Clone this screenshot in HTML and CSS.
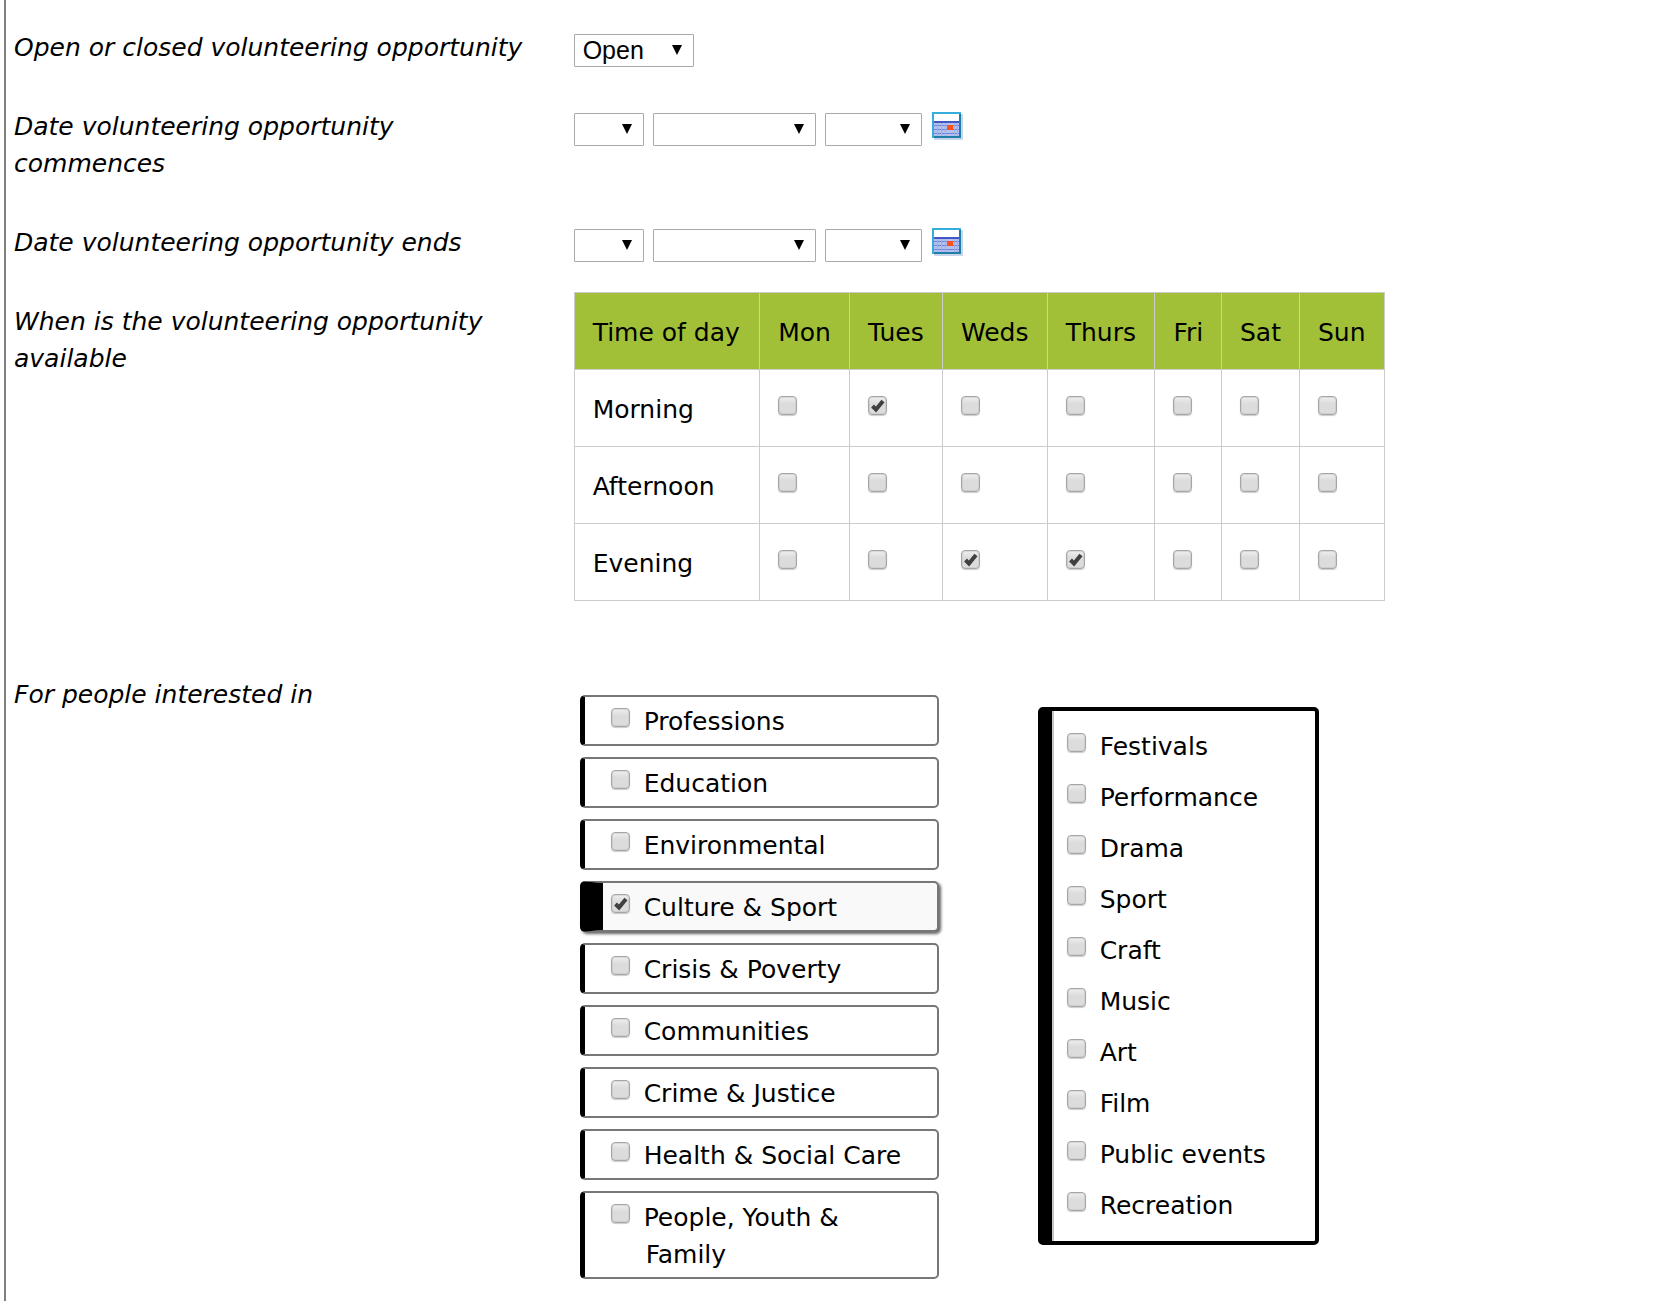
FILE: index.html
```html
<!DOCTYPE html>
<html lang="en">
<head>
<meta charset="utf-8">
<title>Volunteering opportunity</title>
<meta name="viewport" content="width=device-width, initial-scale=1">
<link rel="stylesheet" href="styles.css">
</head>
<body>
<svg class="sprite" aria-hidden="true">
  <symbol id="calendar" viewBox="0 0 31 28">
    <rect x="2" y="2" width="29" height="26" rx="1" fill="#c9d6ea"/>
    <rect x="0" y="0" width="29" height="26" fill="#1f7fa8"/>
    <path d="M0 0H29V2H2V26H0Z" fill="#35aedb"/>
    <rect x="2" y="2" width="25" height="7" fill="#fff"/>
    <rect x="2" y="9" width="25" height="15" fill="#b4c1ee"/>
    <path d="M2 10H27" stroke="#4456c4" stroke-width="2"/>
    <path d="M2 13.500H27M2 17.500H27M2 21.500H27" stroke="#7083d6" stroke-width="1"/>
    <path d="M5.500 11V24M9.500 11V24M13.500 11V24M22.500 11V24M25.500 11V24" stroke="#a0aee6" stroke-width="1"/>
    <rect x="15" y="13" width="6" height="5" fill="#fb4f1c"/>
  </symbol>
</svg>
<form class="form">
  <div class="row">
    <label class="caption" for="status">Open or closed volunteering opportunity</label>
    <div class="controls">
      <select class="select select-status" id="status"><option>Open</option><option>Closed</option></select>
    </div>
  </div>

  <div class="row">
    <label class="caption" for="start-day">Date volunteering opportunity commences</label>
    <div class="controls">
      <select class="select select-day" id="start-day"><option></option></select>
      <select class="select select-month" aria-label="Start month"><option></option></select>
      <select class="select select-year" aria-label="Start year"><option></option></select>
      <button class="calendar" type="button" aria-label="Choose start date"><svg width="31" height="28"><use href="#calendar"/></svg></button>
    </div>
  </div>

  <div class="row">
    <label class="caption" for="end-day">Date volunteering opportunity ends</label>
    <div class="controls">
      <select class="select select-day" id="end-day"><option></option></select>
      <select class="select select-month" aria-label="End month"><option></option></select>
      <select class="select select-year" aria-label="End year"><option></option></select>
      <button class="calendar" type="button" aria-label="Choose end date"><svg width="31" height="28"><use href="#calendar"/></svg></button>
    </div>
  </div>

  <div class="row">
    <div class="caption" id="when">When is the volunteering opportunity available</div>
    <div>
      <table class="times" aria-labelledby="when">
        <thead>
          <tr><th>Time of day</th><th>Mon</th><th>Tues</th><th>Weds</th><th>Thurs</th><th>Fri</th><th>Sat</th><th>Sun</th></tr>
        </thead>
        <tbody>
          <tr>
            <th scope="row">Morning</th>
            <td><input class="tick" type="checkbox" aria-label="Monday morning"></td>
            <td><input class="tick" type="checkbox" aria-label="Tuesday morning" checked></td>
            <td><input class="tick" type="checkbox" aria-label="Wednesday morning"></td>
            <td><input class="tick" type="checkbox" aria-label="Thursday morning"></td>
            <td><input class="tick" type="checkbox" aria-label="Friday morning"></td>
            <td><input class="tick" type="checkbox" aria-label="Saturday morning"></td>
            <td><input class="tick" type="checkbox" aria-label="Sunday morning"></td>
          </tr>
          <tr>
            <th scope="row">Afternoon</th>
            <td><input class="tick" type="checkbox" aria-label="Monday afternoon"></td>
            <td><input class="tick" type="checkbox" aria-label="Tuesday afternoon"></td>
            <td><input class="tick" type="checkbox" aria-label="Wednesday afternoon"></td>
            <td><input class="tick" type="checkbox" aria-label="Thursday afternoon"></td>
            <td><input class="tick" type="checkbox" aria-label="Friday afternoon"></td>
            <td><input class="tick" type="checkbox" aria-label="Saturday afternoon"></td>
            <td><input class="tick" type="checkbox" aria-label="Sunday afternoon"></td>
          </tr>
          <tr>
            <th scope="row">Evening</th>
            <td><input class="tick" type="checkbox" aria-label="Monday evening"></td>
            <td><input class="tick" type="checkbox" aria-label="Tuesday evening"></td>
            <td><input class="tick" type="checkbox" aria-label="Wednesday evening" checked></td>
            <td><input class="tick" type="checkbox" aria-label="Thursday evening" checked></td>
            <td><input class="tick" type="checkbox" aria-label="Friday evening"></td>
            <td><input class="tick" type="checkbox" aria-label="Saturday evening"></td>
            <td><input class="tick" type="checkbox" aria-label="Sunday evening"></td>
          </tr>
        </tbody>
      </table>
    </div>
  </div>

  <div class="row">
    <div class="caption" id="interests">For people interested in</div>
    <div class="interests" role="group" aria-labelledby="interests">
      <div class="topics">
        <label class="topic"><input class="tick" type="checkbox"><span class="name">Professions</span></label>
        <label class="topic"><input class="tick" type="checkbox"><span class="name">Education</span></label>
        <label class="topic"><input class="tick" type="checkbox"><span class="name">Environmental</span></label>
        <label class="topic topic-selected"><input class="tick" type="checkbox" checked><span class="name">Culture &amp; Sport</span></label>
        <label class="topic"><input class="tick" type="checkbox"><span class="name">Crisis &amp; Poverty</span></label>
        <label class="topic"><input class="tick" type="checkbox"><span class="name">Communities</span></label>
        <label class="topic"><input class="tick" type="checkbox"><span class="name">Crime &amp; Justice</span></label>
        <label class="topic"><input class="tick" type="checkbox"><span class="name">Health &amp; Social Care</span></label>
        <label class="topic"><input class="tick" type="checkbox"><span class="name">People, Youth &amp; Family</span></label>
      </div>
      <div class="subtopics">
        <label class="subtopic"><input class="tick" type="checkbox">Festivals</label>
        <label class="subtopic"><input class="tick" type="checkbox">Performance</label>
        <label class="subtopic"><input class="tick" type="checkbox">Drama</label>
        <label class="subtopic"><input class="tick" type="checkbox">Sport</label>
        <label class="subtopic"><input class="tick" type="checkbox">Craft</label>
        <label class="subtopic"><input class="tick" type="checkbox">Music</label>
        <label class="subtopic"><input class="tick" type="checkbox">Art</label>
        <label class="subtopic"><input class="tick" type="checkbox">Film</label>
        <label class="subtopic"><input class="tick" type="checkbox">Public events</label>
        <label class="subtopic"><input class="tick" type="checkbox">Recreation</label>
      </div>
    </div>
  </div>
</form>
</body>
</html>
```

FILE: styles.css
```css
* {
  box-sizing: border-box;
}

body {
  margin: 0;
  background: #fff;
  color: #000;
  font: 25px/37px Verdana, "DejaVu Sans", sans-serif;
}

.sprite {
  display: none;
}

.form {
  min-height: 100vh;
  margin-left: 4px;
  padding: 18px 0 16px 8px;
  border-left: 2px solid #808080;
}

.row {
  display: grid;
  grid-template-columns: minmax(0, 1fr) minmax(0, 2fr);
  column-gap: 8px;
}

.caption {
  padding: 11px 32px 31px 0;
  font-style: italic;
}

.controls {
  display: flex;
  align-items: flex-start;
  gap: 9px;
  padding-top: 16px;
}

.select {
  appearance: none;
  height: 33px;
  margin: 0;
  padding: 0 8px;
  border: 1px solid #a9a9a9;
  border-radius: 1px;
  background: #fff url("data:image/svg+xml,%3Csvg xmlns='http://www.w3.org/2000/svg' width='10' height='10'%3E%3Cpath d='M0 0H10L5 10Z'/%3E%3C/svg%3E") no-repeat right 11px top 10px;
  color: #000;
  font: 25px/31px "Liberation Sans", Arial, sans-serif;
}

.select-status { width: 120px; }
.select-day { width: 70px; }
.select-month { width: 163px; }
.select-year { width: 97px; }

.calendar {
  display: flex;
  margin: -1px 0 0 1px;
  padding: 0;
  border: 0;
  background: none;
}

.tick {
  appearance: none;
  flex: none;
  width: 19px;
  height: 19px;
  margin: 0;
  border: 1px solid #a6a6a6;
  border-radius: 4px;
  background: linear-gradient(#eee, #dcdcdc 40%, #dcdcdc);
  box-shadow: inset 0 0 0 1px #bcbcbc66, 0 1px 1px #0003;
}

.tick:checked {
  background: url("data:image/svg+xml,%3Csvg xmlns='http://www.w3.org/2000/svg' width='17' height='17'%3E%3Cpath d='M3.500 9L7 12.500L14 4' fill='none' stroke='%23404040' stroke-width='4'/%3E%3C/svg%3E"), linear-gradient(#eee, #dcdcdc 40%, #dcdcdc);
}

.times {
  width: 811px;
  margin-bottom: 64px;
  border-collapse: collapse;
}

.times th,
.times td {
  padding: 21px 17px 18px 18px;
  border: 1px solid #ccc;
  font-weight: normal;
  text-align: left;
  vertical-align: top;
}

.times thead th {
  background: #a2c037;
}

.times .tick {
  display: block;
  margin-top: 5px;
}

.interests {
  display: flex;
  align-items: flex-start;
  gap: 99px;
  padding: 30px 0 0 6px;
}

.topics {
  display: flex;
  flex-direction: column;
  gap: 11px;
  width: 359px;
}

.topic {
  display: flex;
  gap: 16px;
  padding: 6px 32px 4px 26px;
  border: 2px solid #777;
  border-left: 5px solid #000;
  border-radius: 5px;
}

.topic-selected {
  padding-left: 8px;
  border-left-width: 23px;
  background: #f9f9f9;
  box-shadow: 2px 2px 3px #0009;
}

.topic .tick {
  margin-top: 5px;
}

.name {
  text-indent: -2px;
}

.subtopics {
  width: 281px;
  margin-top: 12px;
  padding: 10px 0 10px 15px;
  border: 4px solid #000;
  border-left-width: 14px;
  border-radius: 5px;
  box-shadow: inset 2px 0 #c4c4c4;
}

.subtopic {
  display: flex;
  gap: 14px;
  padding: 7px 0;
}

.subtopic .tick {
  margin-top: 5px;
}
```
